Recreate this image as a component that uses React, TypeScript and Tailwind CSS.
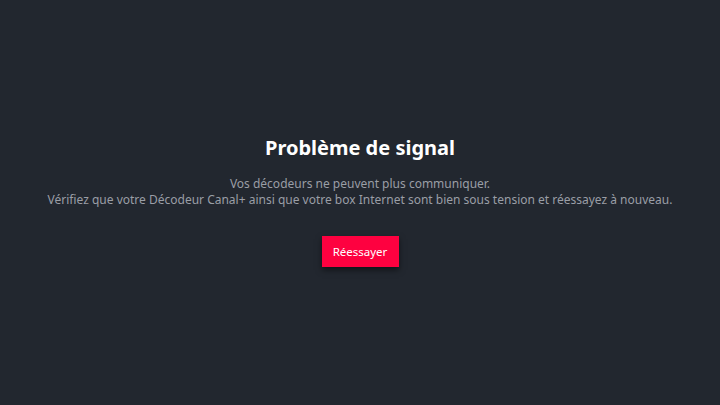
export default function App() {
  return (
    <div
      className="w-[720px] h-[405px] bg-[#22272f] flex flex-col items-center justify-center text-center"
      style={{ fontFamily: '"Noto Sans", "Open Sans", sans-serif' }}
    >
      <h1 className="text-[20px] leading-[28px] font-bold text-white mt-[-4px]">Problème de signal</h1>
      <p className="mt-[14px] text-[12px] leading-[16px] text-[#9a9ea6]">
        Vos décodeurs ne peuvent plus communiquer.
        <br />
        Vérifiez que votre Décodeur Canal+ ainsi que votre box Internet sont bien sous tension et réessayez à nouveau.
      </p>
      <button className="mt-[28px] w-[77px] h-[31px] bg-[#fe0140] text-white text-[11.5px] shadow-[0_3px_6px_rgba(0,0,0,0.5)]">
        Réessayer
      </button>
    </div>
  );
}
